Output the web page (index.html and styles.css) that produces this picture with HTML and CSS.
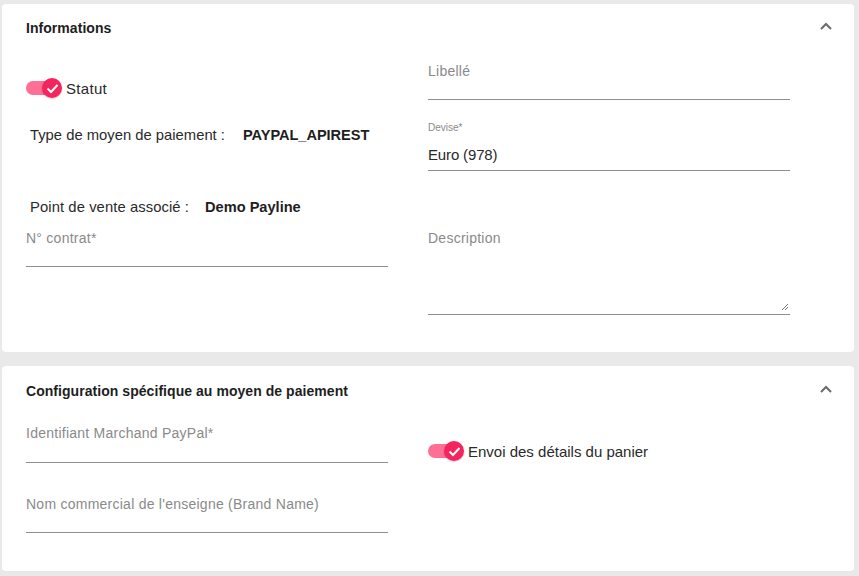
FILE: index.html
```html
<!DOCTYPE html>
<html lang="fr">
<head>
<meta charset="utf-8">
<link rel="stylesheet" href="styles.css">
</head>
<body>
<div class="page">
  <section class="card card-info">
    <div class="card-head">
      <h2 class="card-title">Informations</h2>
      <svg class="chevron" width="14" height="10" viewBox="0 0 14 10"><path d="M2 8 L7 3 L12 8" fill="none" stroke="#6b6b6b" stroke-width="2"/></svg>
    </div>
    <div class="cols">
      <div class="col">
        <div class="toggle-row t-statut">
          <span class="toggle"><span class="track"></span><span class="thumb"><svg width="13" height="11" viewBox="0 0 13 11"><path d="M1.5 5.5 L5 9 L11.5 2" fill="none" stroke="#fff" stroke-width="2"/></svg></span></span>
          <span class="toggle-label">Statut</span>
        </div>
        <div class="info-row r-type"><span class="info-key">Type de moyen de paiement :</span><span class="info-val v-type">PAYPAL_APIREST</span></div>
        <div class="info-row r-point"><span class="info-key">Point de vente associé :</span><span class="info-val v-point">Demo Payline</span></div>
        <div class="field f-contrat"><div class="label">N° contrat*</div><div class="input"></div></div>
      </div>
      <div class="col">
        <div class="field f-libelle"><div class="label">Libellé</div><div class="input"></div></div>
        <div class="field f-devise"><div class="small-label">Devise*</div><div class="input value">Euro (978)</div></div>
        <div class="field f-desc"><div class="label">Description</div><div class="input textarea"><svg class="grip" width="8" height="8" viewBox="0 0 8 8"><path d="M1 7 L7 1 M4 7 L7 4" stroke="#777" stroke-width="1"/></svg></div></div>
      </div>
    </div>
  </section>
  <section class="card card-conf">
    <div class="card-head">
      <h2 class="card-title">Configuration spécifique au moyen de paiement</h2>
      <svg class="chevron" width="14" height="10" viewBox="0 0 14 10"><path d="M2 8 L7 3 L12 8" fill="none" stroke="#6b6b6b" stroke-width="2"/></svg>
    </div>
    <div class="cols">
      <div class="col">
        <div class="field f-ident"><div class="label">Identifiant Marchand PayPal*</div><div class="input"></div></div>
        <div class="field f-brand"><div class="label">Nom commercial de l'enseigne (Brand Name)</div><div class="input"></div></div>
      </div>
      <div class="col">
        <div class="toggle-row t-panier">
          <span class="toggle"><span class="track"></span><span class="thumb"><svg width="13" height="11" viewBox="0 0 13 11"><path d="M1.5 5.5 L5 9 L11.5 2" fill="none" stroke="#fff" stroke-width="2"/></svg></span></span>
          <span class="toggle-label">Envoi des détails du panier</span>
        </div>
      </div>
    </div>
  </section>
</div>
</body>
</html>
```

FILE: styles.css
```css
* { box-sizing: border-box; }
html, body { margin: 0; padding: 0; }
body {
  background: #e8e9e8;
  font-family: "Liberation Sans", Arial, sans-serif;
  color: #333;
  width: 859px;
  height: 576px;
  overflow: hidden;
}
.page {
  padding: 4px 5px 0 2px;
  display: flex;
  flex-direction: column;
  gap: 14px;
}
.card {
  background: #fff;
  border-radius: 4px;
  padding: 0 24px;
}
.card-info { height: 348px; padding-top: 14px; }
.card-conf { height: 205px; padding-top: 15px; }
.card-head {
  display: flex;
  justify-content: space-between;
  align-items: center;
  height: 20px;
}
.card-title {
  margin: 0;
  font-size: 14px;
  line-height: 20px;
  font-weight: bold;
  color: #1e1e1e;
  letter-spacing: 0.05px;
}
.chevron { margin-right: -3px; margin-top: -4px; }
.card-conf .chevron { margin-top: -5px; }
.cols {
  display: flex;
  gap: 40px;
}
.col {
  width: 362px;
  display: flex;
  flex-direction: column;
}
.toggle-row {
  display: flex;
  align-items: center;
  height: 24px;
  gap: 4px;
}
.t-statut { margin-top: 38px; }
.t-panier { margin-top: 38px; }
.toggle {
  position: relative;
  width: 36px;
  height: 20px;
  flex: none;
}
.track {
  position: absolute;
  left: 0;
  top: 3px;
  width: 34px;
  height: 14px;
  border-radius: 7px;
  background: #fd6f95;
}
.thumb {
  position: absolute;
  left: 16px;
  top: 0;
  width: 20px;
  height: 20px;
  border-radius: 50%;
  background: #f6245e;
  display: flex;
  align-items: center;
  justify-content: center;
  box-shadow: 0 1px 2px rgba(0,0,0,0.2);
}
.toggle-label {
  font-size: 15px;
  color: #2a2a2a;
}
.t-statut .toggle-label { letter-spacing: 0.3px; }
.info-row {
  display: flex;
  align-items: baseline;
  line-height: 20px;
  padding-left: 4px;
}
.info-key { color: #2a2a2a; font-size: 14.8px; }
.r-point .info-key { letter-spacing: 0.08px; }
.info-val { font-weight: bold; color: #1e1e1e; font-size: 14.6px; }
.v-type { margin-left: 18px; letter-spacing: -0.05px; }
.v-point { margin-left: 16px; }
.r-type { margin-top: 25px; }
.r-point { margin-top: 52px; }
.field { display: flex; flex-direction: column; }
.label {
  font-size: 14px;
  line-height: 18px;
  color: #8a8a8a;
  letter-spacing: 0.25px;
}
.small-label {
  font-size: 10px;
  line-height: 12px;
  color: #8a8a8a;
}
.input {
  border-bottom: 1px solid #8f8f8f;
  height: 20px;
}
.value {
  height: 37px;
  padding-top: 11px;
  font-size: 15px;
  line-height: 20px;
  color: #2a2a2a;
  letter-spacing: -0.15px;
}
.textarea {
  height: 68px;
  position: relative;
}
.grip { position: absolute; right: 1px; bottom: 3px; }
.f-contrat { margin-top: 12px; }
.f-libelle { margin-top: 24px; }
.f-devise { margin-top: 22px; }
.f-desc { margin-top: 58px; }
.f-ident { margin-top: 23px; }
.f-ident .input { height: 21px; }
.f-brand { margin-top: 32px; }
```
